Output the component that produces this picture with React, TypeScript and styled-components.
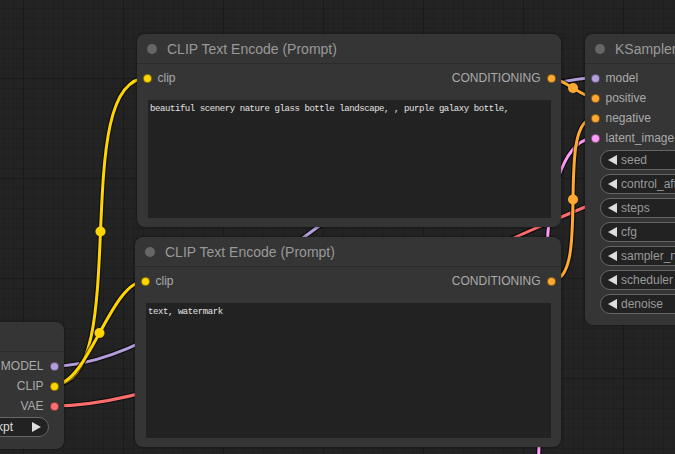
import React from "react";
import styled, { createGlobalStyle } from "styled-components";

const GlobalStyle = createGlobalStyle`
  html, body { margin: 0; padding: 0; background: #232323; }
  body { font-family: "Liberation Sans", Arial, sans-serif; overflow: hidden; }
  * { box-sizing: border-box; }
`;

const Canvas = styled.div`
  position: relative;
  width: 675px;
  height: 454px;
  overflow: hidden;
  background-color: #232323;
  background-image:
    linear-gradient(to right, #1a1a1a 1px, transparent 1px),
    linear-gradient(to bottom, #1a1a1a 1px, transparent 1px),
    linear-gradient(to right, #1f1f1f 1px, transparent 1px),
    linear-gradient(to bottom, #1f1f1f 1px, transparent 1px);
  background-size: 100px 100px, 100px 100px, 10px 10px, 10px 10px;
  background-position: 23px 0, 0 78px, 3px 0, 0 8px;
`;

const Links = styled.svg`
  position: absolute;
  inset: 0;
  width: 675px;
  height: 454px;
  pointer-events: none;
`;

const NodeBox = styled.div<{ $x: number; $y: number; $w: number; $h: number }>`
  position: absolute;
  left: ${(p) => p.$x}px;
  top: ${(p) => p.$y}px;
  width: ${(p) => p.$w}px;
  height: ${(p) => p.$h}px;
  display: flex;
  flex-direction: column;
  background: #353535;
  border-radius: 8px;
  box-shadow: 0 0 3px rgba(0, 0, 0, 0.55);
`;

const TitleBar = styled.div`
  height: 30px;
  flex: none;
  display: flex;
  align-items: center;
  gap: 10px;
  padding-left: 10px;
  padding-top: 1px;
  border-bottom: 1px solid #2b2b2b;
  color: #999;
  font-size: 14px;
  white-space: nowrap;
`;

const TitleDot = styled.span`
  width: 10px;
  height: 10px;
  border-radius: 50%;
  background: #666;
  flex: none;
`;

const Body = styled.div<{ $pb?: number }>`
  flex: 1;
  display: flex;
  flex-direction: column;
  padding-top: 4px;
  padding-bottom: ${(p) => p.$pb ?? 0}px;
  min-height: 0;
`;

const SlotRow = styled.div`
  height: 20px;
  flex: none;
  display: flex;
  align-items: center;
  justify-content: space-between;
  padding: 0 5.5px;
`;

const Slot = styled.div<{ $out?: boolean }>`
  display: flex;
  flex-direction: ${(p) => (p.$out ? "row-reverse" : "row")};
  align-items: center;
  gap: 6px;
  color: #aaa;
  font-size: 12px;
  white-space: nowrap;
`;

const SlotDot = styled.span<{ $c: string }>`
  width: 9px;
  height: 9px;
  border-radius: 50%;
  background: ${(p) => p.$c};
  border: 1px solid rgba(0, 0, 0, 0.45);
  flex: none;
`;

const PromptBox = styled.div<{ $ml: number }>`
  flex: 1;
  margin: 12px 10px 0 ${(p) => p.$ml}px;
  background: #222;
  color: #e2e2e2;
  font-family: "Liberation Mono", "DejaVu Sans Mono", monospace;
  font-size: 9px;
  letter-spacing: -0.42px;
  line-height: 1.25;
  padding: 4px 2px;
  white-space: pre-wrap;
`;

const WidgetList = styled.div<{ $mt: number }>`
  display: flex;
  flex-direction: column;
  gap: 4px;
  margin-top: ${(p) => p.$mt}px;
`;

const Widget = styled.div`
  height: 20px;
  margin: 0 15px;
  display: flex;
  align-items: center;
  gap: 4px;
  padding: 0 7px;
  border: 1px solid #666;
  border-radius: 10px;
  background: #222;
  color: #999;
  font-size: 12px;
  white-space: nowrap;
  overflow: hidden;
`;

const Arrow = styled.span<{ $dir: "left" | "right" }>`
  width: 9px;
  height: 10px;
  flex: none;
  background: #ddd;
  clip-path: ${(p) =>
    p.$dir === "left"
      ? "polygon(100% 0, 100% 100%, 0 50%)"
      : "polygon(0 0, 0 100%, 100% 50%)"};
`;

const Spacer = styled.span`
  flex: 1;
`;

const Value = styled.span`
  color: #ddd;
  margin-right: 15px;
`;

const COLORS = {
  model: "#B39DDB",
  clip: "#FFD500",
  vae: "#FF6E6E",
  cond: "#FFA931",
  latent: "#FF9CF9",
};

type LinkDef = { d: string; c: string; mid?: [number, number] };

const links: LinkDef[] = [
  { d: "M54 366 C207 366, 442 78, 595 78", c: COLORS.model },
  { d: "M54 406 C251 406, 603 150, 800 150", c: COLORS.vae },
  { d: "M538 470 C542 380, 545 280, 548 232 C551 190, 565 138, 595 138", c: COLORS.latent },
  { d: "M54 385 C134 385, 67 78, 147 78", c: COLORS.clip, mid: [100.5, 231.5] },
  { d: "M54 385 C88.5 385, 110.5 281, 145 281", c: COLORS.clip, mid: [99.5, 333] },
  { d: "M551 78 C563 78, 583 98, 595 98", c: COLORS.cond, mid: [573, 88] },
  { d: "M551 281 C593 281, 553 118, 595 118", c: COLORS.cond, mid: [573, 199.5] },
];

type SlotDef = { label: string; c: string };

const ClipNode: React.FC<{ x: number; y: number; w: number; h: number; text: string; ml: number }> = ({
  x,
  y,
  w,
  h,
  text,
  ml,
}) => (
  <NodeBox $x={x} $y={y} $w={w} $h={h}>
    <TitleBar>
      <TitleDot />
      CLIP Text Encode (Prompt)
    </TitleBar>
    <Body $pb={9}>
      <SlotRow>
        <Slot>
          <SlotDot $c={COLORS.clip} />
          clip
        </Slot>
        <Slot $out>
          <SlotDot $c={COLORS.cond} />
          CONDITIONING
        </Slot>
      </SlotRow>
      <PromptBox $ml={ml}>{text}</PromptBox>
    </Body>
  </NodeBox>
);

const samplerInputs: SlotDef[] = [
  { label: "model", c: COLORS.model },
  { label: "positive", c: COLORS.cond },
  { label: "negative", c: COLORS.cond },
  { label: "latent_image", c: COLORS.latent },
];

const samplerWidgets: [string, string][] = [
  ["seed", "156680208700286"],
  ["control_after_generate", "randomize"],
  ["steps", "20"],
  ["cfg", "8.0"],
  ["sampler_name", "euler"],
  ["scheduler", "normal"],
  ["denoise", "1.00"],
];

const ckptOutputs: SlotDef[] = [
  { label: "MODEL", c: COLORS.model },
  { label: "CLIP", c: COLORS.clip },
  { label: "VAE", c: COLORS.vae },
];

export default function App() {
  return (
    <>
      <GlobalStyle />
      <Canvas>
        <Links viewBox="0 0 675 454">
          {links.map((l, i) => (
            <g key={i}>
              <path d={l.d} fill="none" stroke="rgba(0,0,0,0.6)" strokeWidth={5.5} />
              <path d={l.d} fill="none" stroke={l.c} strokeWidth={3} />
              {l.mid && <circle cx={l.mid[0]} cy={l.mid[1]} r={5} fill={l.c} />}
            </g>
          ))}
        </Links>

        <ClipNode
          x={137}
          y={34}
          w={424}
          h={193}
          ml={11}
          text="beautiful scenery nature glass bottle landscape, , purple galaxy bottle,"
        />
        <ClipNode x={135} y={237} w={426} h={210} ml={11} text="text, watermark" />

        <NodeBox $x={585} $y={34} $w={315} $h={291}>
          <TitleBar>
            <TitleDot />
            KSampler
          </TitleBar>
          <Body>
            {samplerInputs.map((s) => (
              <SlotRow key={s.label}>
                <Slot>
                  <SlotDot $c={s.c} />
                  {s.label}
                </Slot>
                {s.label === "model" && (
                  <Slot $out>
                    <SlotDot $c={COLORS.latent} />
                    LATENT
                  </Slot>
                )}
              </SlotRow>
            ))}
            <WidgetList $mt={2}>
              {samplerWidgets.map(([label, value]) => (
                <Widget key={label}>
                  <Arrow $dir="left" />
                  {label}
                  <Spacer />
                  <Value>{value}</Value>
                  <Arrow $dir="right" />
                </Widget>
              ))}
            </WidgetList>
          </Body>
        </NodeBox>

        <NodeBox $x={-251} $y={322} $w={315} $h={127}>
          <TitleBar>
            <TitleDot />
            Load Checkpoint
          </TitleBar>
          <Body>
            {ckptOutputs.map((s) => (
              <SlotRow key={s.label}>
                <span />
                <Slot $out>
                  <SlotDot $c={s.c} />
                  {s.label}
                </Slot>
              </SlotRow>
            ))}
            <WidgetList $mt={1}>
              <Widget>
                <Arrow $dir="left" />
                ckpt_name
                <Spacer />
                <Value>v1-5-pruned-emaonly.ckpt</Value>
                <Arrow $dir="right" />
              </Widget>
            </WidgetList>
          </Body>
        </NodeBox>
      </Canvas>
    </>
  );
}
